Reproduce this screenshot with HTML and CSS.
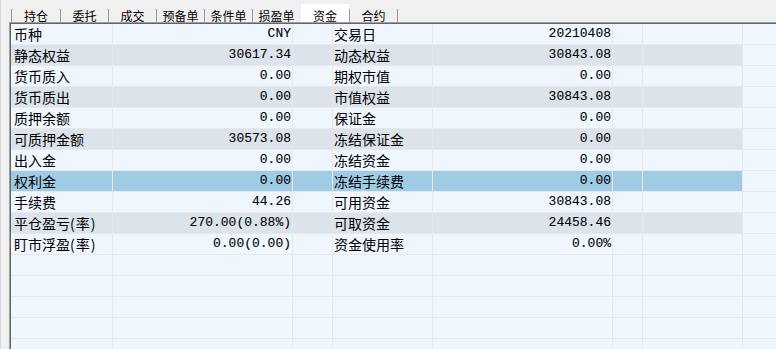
FILE: index.html
```html
<!DOCTYPE html>
<html lang="zh-CN">
<head>
<meta charset="utf-8">
<title>资金</title>
<link rel="stylesheet" href="styles.css">
</head>
<body>
<div class="app">
  <div class="tabs">
    <div class="tab">持仓</div>
    <div class="tab">委托</div>
    <div class="tab">成交</div>
    <div class="tab">预备单</div>
    <div class="tab">条件单</div>
    <div class="tab">损盈单</div>
    <div class="tab active">资金</div>
    <div class="tab last">合约</div>
  </div>
  <div class="frame">
    <div class="grid">
      <div class="row"><div class="c lbl">币种</div><div class="c val">CNY</div><div class="c"></div><div class="c lbl2">交易日</div><div class="c val">20210408</div><div class="c"></div><div class="c"></div><div class="c fill"></div></div>
      <div class="row alt"><div class="c lbl">静态权益</div><div class="c val">30617.34</div><div class="c"></div><div class="c lbl2">动态权益</div><div class="c val">30843.08</div><div class="c"></div><div class="c"></div><div class="c fill"></div></div>
      <div class="row"><div class="c lbl">货币质入</div><div class="c val">0.00</div><div class="c"></div><div class="c lbl2">期权市值</div><div class="c val">0.00</div><div class="c"></div><div class="c"></div><div class="c fill"></div></div>
      <div class="row alt"><div class="c lbl">货币质出</div><div class="c val">0.00</div><div class="c"></div><div class="c lbl2">市值权益</div><div class="c val">30843.08</div><div class="c"></div><div class="c"></div><div class="c fill"></div></div>
      <div class="row"><div class="c lbl">质押余额</div><div class="c val">0.00</div><div class="c"></div><div class="c lbl2">保证金</div><div class="c val">0.00</div><div class="c"></div><div class="c"></div><div class="c fill"></div></div>
      <div class="row alt"><div class="c lbl">可质押金额</div><div class="c val">30573.08</div><div class="c"></div><div class="c lbl2">冻结保证金</div><div class="c val">0.00</div><div class="c"></div><div class="c"></div><div class="c fill"></div></div>
      <div class="row"><div class="c lbl">出入金</div><div class="c val">0.00</div><div class="c"></div><div class="c lbl2">冻结资金</div><div class="c val">0.00</div><div class="c"></div><div class="c"></div><div class="c fill"></div></div>
      <div class="row sel"><div class="c lbl">权利金</div><div class="c val">0.00</div><div class="c"></div><div class="c lbl2">冻结手续费</div><div class="c val">0.00</div><div class="c"></div><div class="c"></div><div class="c fill"></div></div>
      <div class="row"><div class="c lbl">手续费</div><div class="c val">44.26</div><div class="c"></div><div class="c lbl2">可用资金</div><div class="c val">30843.08</div><div class="c"></div><div class="c"></div><div class="c fill"></div></div>
      <div class="row alt"><div class="c lbl">平仓盈亏<span class="paren">(率)</span></div><div class="c val">270.00(0.88%)</div><div class="c"></div><div class="c lbl2">可取资金</div><div class="c val">24458.46</div><div class="c"></div><div class="c"></div><div class="c fill"></div></div>
      <div class="row"><div class="c lbl">盯市浮盈<span class="paren">(率)</span></div><div class="c val">0.00(0.00)</div><div class="c"></div><div class="c lbl2">资金使用率</div><div class="c val">0.00%</div><div class="c"></div><div class="c"></div><div class="c fill"></div></div>
      <div class="row"><div class="c"></div><div class="c"></div><div class="c"></div><div class="c"></div><div class="c"></div><div class="c"></div><div class="c"></div><div class="c fill"></div></div>
      <div class="row"><div class="c"></div><div class="c"></div><div class="c"></div><div class="c"></div><div class="c"></div><div class="c"></div><div class="c"></div><div class="c fill"></div></div>
      <div class="row"><div class="c"></div><div class="c"></div><div class="c"></div><div class="c"></div><div class="c"></div><div class="c"></div><div class="c"></div><div class="c fill"></div></div>
      <div class="row"><div class="c"></div><div class="c"></div><div class="c"></div><div class="c"></div><div class="c"></div><div class="c"></div><div class="c"></div><div class="c fill"></div></div>
      <div class="row"><div class="c"></div><div class="c"></div><div class="c"></div><div class="c"></div><div class="c"></div><div class="c"></div><div class="c"></div><div class="c fill"></div></div>
    </div>
  </div>
</div>
</body>
</html>
```

FILE: styles.css
```css
html, body {
  margin: 0;
  padding: 0;
  background: #f0f0f0;
  width: 776px;
  height: 349px;
  overflow: hidden;
}

.app {
  height: 349px;
  display: flex;
  flex-direction: column;
  border-left: 1px solid #d6d6d6;
  box-sizing: border-box;
  overflow: hidden;
  font-family: "Noto Sans CJK SC", sans-serif;
}

.tabs {
  height: 22px;
  flex: none;
  display: flex;
  align-items: flex-end;
  padding-left: 10px;
}

.tab {
  height: 13px;
  width: 48px;
  box-sizing: border-box;
  border-left: 1px solid #9a9a9a;
  font-size: 12px;
  line-height: 14px;
  text-align: center;
  color: #000;
  overflow: visible;
  white-space: nowrap;
}

.tab:first-child { width: 49px; }

.tab.active {
  width: 49px;
  background: #ffffff;
  border-left-color: #f0f0f0;
  height: 18px;
  padding-top: 5px;
}

.tab.active + .tab { border-left-color: #9a9a9a; }

.tab.last {
  border-right: 1px solid #9a9a9a;
  width: 49px;
}

.frame {
  flex: 1;
  margin-left: 8px;
  border-left: 1px solid #a0a0a0;
  border-top: 1px solid #a0a0a0;
  overflow: hidden;
}

.grid {
  height: 100%;
  border-left: 1px solid #646464;
  border-top: 1px solid #646464;
  box-sizing: border-box;
  overflow: hidden;
}

.row {
  display: grid;
  grid-template-columns: 102px 180px 40px 100px 180px 30px 100px 1fr;
  height: 21px;
}

.c {
  box-sizing: border-box;
  height: 21px;
  border-right: 1px solid #e8e8e8;
  border-bottom: 1px solid #e8e8e8;
  background: #eff6fe;
  line-height: 20px;
  white-space: nowrap;
  overflow: hidden;
  color: #000;
}

.row.alt .c { background: #dce3eb; }
.row.sel .c { background: #9fcbe5; }
.row .c.fill { background: #eff6fe; border-right: none; }

.lbl {
  font-size: 14px;
  padding-left: 3px;
}

.lbl2 {
  font-size: 14px;
  padding-left: 1px;
}

.paren {
  letter-spacing: 1px;
}

.val {
  font-family: "Liberation Mono", monospace;
  font-size: 13px;
  text-align: right;
  padding-right: 1px;
  -webkit-text-stroke: 0.08px #000;
}
```
